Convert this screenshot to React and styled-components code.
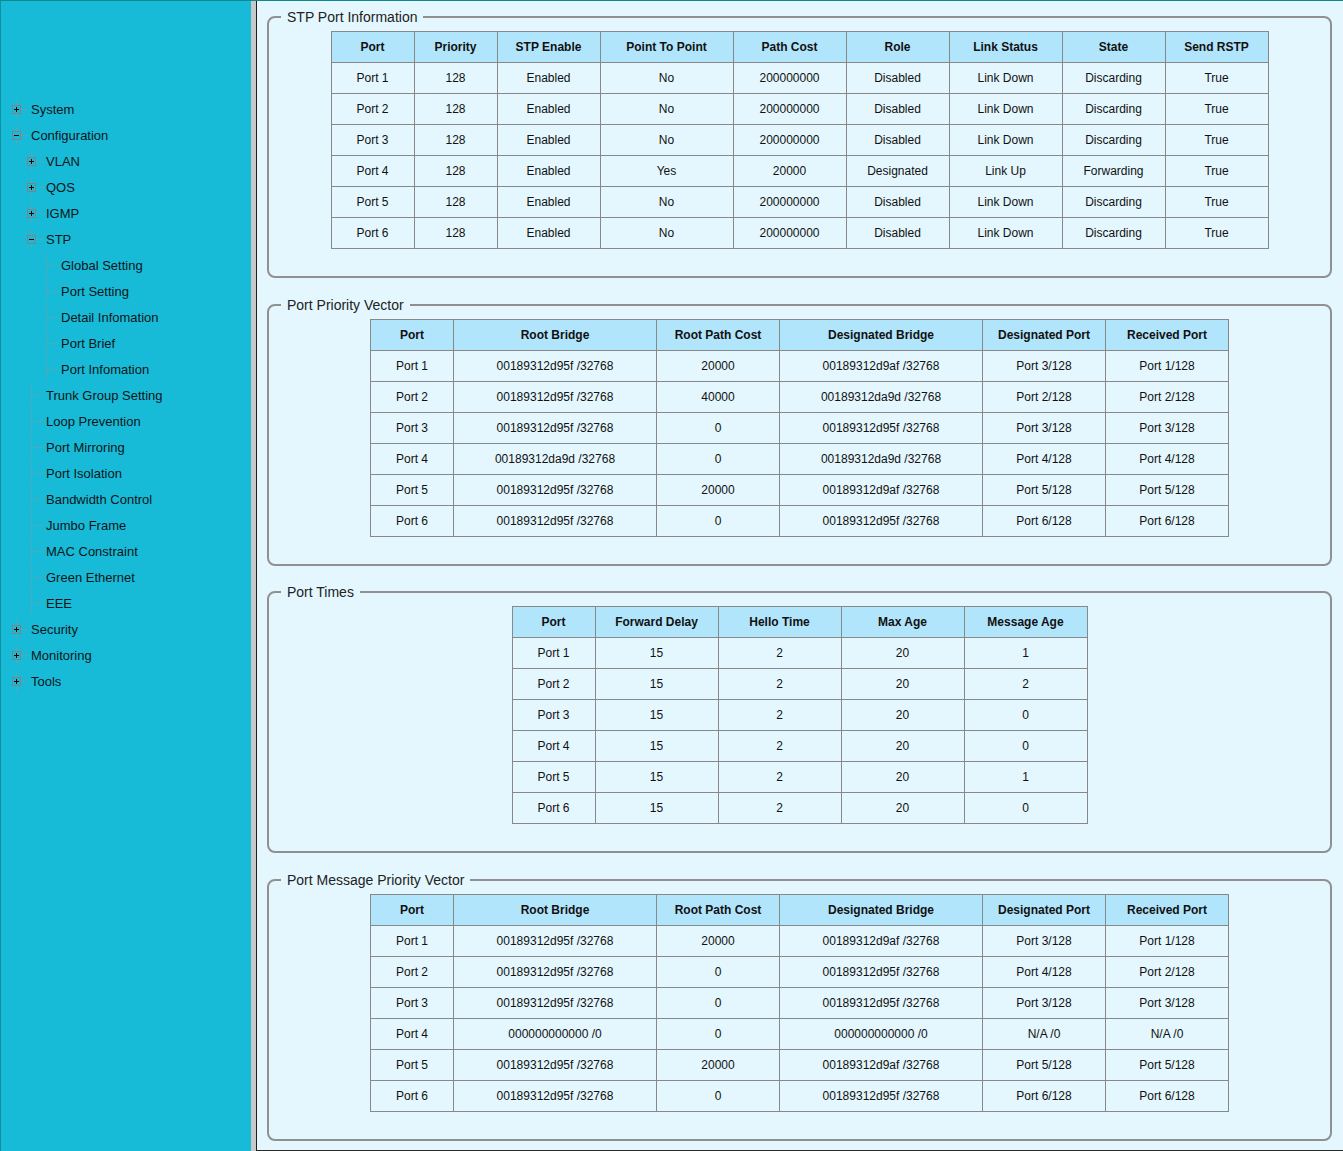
import React from 'react';
import styled, { createGlobalStyle } from 'styled-components';

const GlobalStyle = createGlobalStyle`
  html, body {
    margin: 0;
    padding: 0;
    background: #e4f7fe;
  }
  body {
    font-family: "Liberation Sans", Arial, sans-serif;
  }
`;

// sidebar tree: level, label, kind (plus / minus / leaf)
const menu = [
  [1, 'System', 'plus'],
  [1, 'Configuration', 'minus'],
  [2, 'VLAN', 'plus'],
  [2, 'QOS', 'plus'],
  [2, 'IGMP', 'plus'],
  [2, 'STP', 'minus'],
  [3, 'Global Setting', 'leaf'],
  [3, 'Port Setting', 'leaf'],
  [3, 'Detail Infomation', 'leaf'],
  [3, 'Port Brief', 'leaf'],
  [3, 'Port Infomation', 'leaf'],
  [2, 'Trunk Group Setting', 'leaf'],
  [2, 'Loop Prevention', 'leaf'],
  [2, 'Port Mirroring', 'leaf'],
  [2, 'Port Isolation', 'leaf'],
  [2, 'Bandwidth Control', 'leaf'],
  [2, 'Jumbo Frame', 'leaf'],
  [2, 'MAC Constraint', 'leaf'],
  [2, 'Green Ethernet', 'leaf'],
  [2, 'EEE', 'leaf'],
  [1, 'Security', 'plus'],
  [1, 'Monitoring', 'plus'],
  [1, 'Tools', 'plus'],
];

const ports = ['Port 1', 'Port 2', 'Port 3', 'Port 4', 'Port 5', 'Port 6'];

const d95f = '00189312d95f /32768';
const d9af = '00189312d9af /32768';
const da9d = '00189312da9d /32768';

const sections = [
  {
    title: 'STP Port Information',
    cols: [
      ['Port', 83],
      ['Priority', 83],
      ['STP Enable', 103],
      ['Point To Point', 133],
      ['Path Cost', 113],
      ['Role', 103],
      ['Link Status', 113],
      ['State', 103],
      ['Send RSTP', 103],
    ],
    rows: ports.map((p, i) =>
      i === 3
        ? [p, '128', 'Enabled', 'Yes', '20000', 'Designated', 'Link Up', 'Forwarding', 'True']
        : [p, '128', 'Enabled', 'No', '200000000', 'Disabled', 'Link Down', 'Discarding', 'True'],
    ),
  },
  {
    title: 'Port Priority Vector',
    cols: [
      ['Port', 83],
      ['Root Bridge', 203],
      ['Root Path Cost', 123],
      ['Designated Bridge', 203],
      ['Designated Port', 123],
      ['Received Port', 123],
    ],
    rows: [
      ['Port 1', d95f, '20000', d9af, 'Port 3/128', 'Port 1/128'],
      ['Port 2', d95f, '40000', da9d, 'Port 2/128', 'Port 2/128'],
      ['Port 3', d95f, '0', d95f, 'Port 3/128', 'Port 3/128'],
      ['Port 4', da9d, '0', da9d, 'Port 4/128', 'Port 4/128'],
      ['Port 5', d95f, '20000', d9af, 'Port 5/128', 'Port 5/128'],
      ['Port 6', d95f, '0', d95f, 'Port 6/128', 'Port 6/128'],
    ],
  },
  {
    title: 'Port Times',
    cols: [
      ['Port', 83],
      ['Forward Delay', 123],
      ['Hello Time', 123],
      ['Max Age', 123],
      ['Message Age', 123],
    ],
    rows: ports.map((p, i) => [p, '15', '2', '20', ['1', '2', '0', '0', '1', '0'][i]]),
  },
  {
    title: 'Port Message Priority Vector',
    cols: [
      ['Port', 83],
      ['Root Bridge', 203],
      ['Root Path Cost', 123],
      ['Designated Bridge', 203],
      ['Designated Port', 123],
      ['Received Port', 123],
    ],
    rows: [
      ['Port 1', d95f, '20000', d9af, 'Port 3/128', 'Port 1/128'],
      ['Port 2', d95f, '0', d95f, 'Port 4/128', 'Port 2/128'],
      ['Port 3', d95f, '0', d95f, 'Port 3/128', 'Port 3/128'],
      ['Port 4', '000000000000 /0', '0', '000000000000 /0', 'N/A /0', 'N/A /0'],
      ['Port 5', d95f, '20000', d9af, 'Port 5/128', 'Port 5/128'],
      ['Port 6', d95f, '0', d95f, 'Port 6/128', 'Port 6/128'],
    ],
  },
];

const DOT = '#7f9ca3';
const BOX = '#8a7f80';

function TreeIcon({ kind }) {
  if (kind === 'leaf') {
    return (
      <IconSvg width="23" height="26">
        <line x1="8.5" y1="1" x2="8.5" y2="25" stroke={DOT} strokeDasharray="1 1" />
        <line x1="9" y1="13.5" x2="20" y2="13.5" stroke={DOT} strokeDasharray="1 1" />
      </IconSvg>
    );
  }
  return (
    <IconSvg width="23" height="26">
      <line x1="8.5" y1="4" x2="8.5" y2="9" stroke={DOT} strokeDasharray="1 1" />
      <line x1="8.5" y1="18" x2="8.5" y2="23" stroke={DOT} strokeDasharray="1 1" />
      <line x1="13" y1="13.5" x2="20" y2="13.5" stroke={DOT} strokeDasharray="1 1" />
      <rect x="4.5" y="9.5" width="8" height="8" fill="none" stroke={BOX} />
      <line x1="6" y1="13.5" x2="11" y2="13.5" stroke="#000" />
      {kind === 'plus' && <line x1="8.5" y1="11" x2="8.5" y2="16" stroke="#000" />}
    </IconSvg>
  );
}

function DataTable({ cols, rows }) {
  const width = cols.reduce((s, c) => s + c[1], 0) + 1;
  return (
    <Table style={{ width }}>
      <colgroup>
        {cols.map(([name, w]) => (
          <col key={name} style={{ width: w }} />
        ))}
      </colgroup>
      <thead>
        <tr>
          {cols.map(([name]) => (
            <Th key={name}>{name}</Th>
          ))}
        </tr>
      </thead>
      <tbody>
        {rows.map((row) => (
          <tr key={row[0]}>
            {row.map((cell, i) => (
              <Td key={i}>{cell}</Td>
            ))}
          </tr>
        ))}
      </tbody>
    </Table>
  );
}

export default function App() {
  return (
    <>
      <GlobalStyle />
      <Frame>
        <Sidebar>
          <Tree>
            {menu.map(([level, label, kind]) => (
              <Node key={label} level={level}>
                <TreeIcon kind={kind} />
                <NodeLabel>{label}</NodeLabel>
              </Node>
            ))}
          </Tree>
        </Sidebar>
        <Splitter />
        <Main>
          {sections.map((s) => (
            <Fieldset key={s.title}>
              <Legend>{s.title}</Legend>
              <DataTable cols={s.cols} rows={s.rows} />
            </Fieldset>
          ))}
        </Main>
      </Frame>
    </>
  );
}

const Frame = styled.div`
  display: flex;
  height: 1151px;
  box-sizing: border-box;
  border-top: 1px solid #0f8a8c;
  overflow: hidden;
`;

const Sidebar = styled.div`
  width: 251px;
  flex-shrink: 0;
  box-sizing: border-box;
  background: #18bbd7;
  border-left: 1px solid #11909f;
`;

const Tree = styled.div`
  padding-top: 95px;
`;

const Node = styled.div`
  display: flex;
  align-items: center;
  height: 26px;
  padding-left: ${(props) => 7 + (props.level - 1) * 15}px;
`;

const IconSvg = styled.svg`
  display: block;
  flex-shrink: 0;
`;

const NodeLabel = styled.span`
  font-size: 13px;
  color: #0d1518;
  white-space: nowrap;
`;

const Splitter = styled.div`
  width: 5px;
  flex-shrink: 0;
  background: #c8c8c8;
`;

const Main = styled.div`
  flex: 1;
  box-sizing: border-box;
  background: #e4f7fe;
  border-left: 1px solid #1e1e1e;
  border-bottom: 1px solid #2a2a2a;
  padding-top: 8px;
  height: 1150px;
`;

const Fieldset = styled.fieldset`
  margin: 0 11px 18.5px 10px;
  padding: 6px 12px 27px;
  border: 2px solid #909090;
  border-radius: 8px;
  min-width: 0;
`;

const Legend = styled.legend`
  padding: 0 6px;
  font-size: 14px;
  line-height: 16px;
  color: #222;
`;

const Table = styled.table`
  margin: 0 auto;
  border-collapse: collapse;
  table-layout: fixed;
  font-size: 12px;
  color: #111;
`;

const Th = styled.th`
  height: 30px;
  padding: 0;
  background: #b1e5fc;
  border: 1px solid #888;
  font-weight: bold;
  text-align: center;
`;

const Td = styled.td`
  height: 30px;
  padding: 0;
  border: 1px solid #888;
  text-align: center;
`;
